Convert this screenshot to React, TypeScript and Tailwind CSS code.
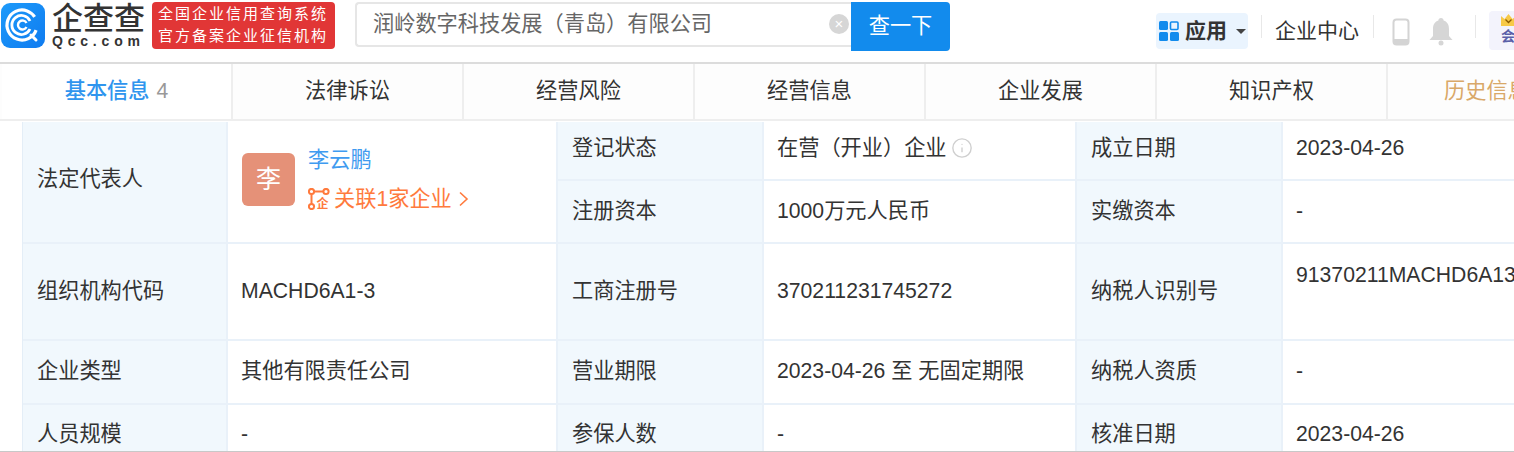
import { Info } from 'lucide-react';

const font = 'font-["Liberation_Sans","Noto_Sans_CJK_SC",sans-serif]';

const tabs = ['法律诉讼', '经营风险', '经营信息', '企业发展', '知识产权'];

function Logo() {
  return (
    <svg width="44" height="45" viewBox="0 0 44 45" className="shrink-0">
      <defs>
        <linearGradient id="qcc" x1="0" y1="0" x2="1" y2="1">
          <stop offset="0" stopColor="#1d9bfa" />
          <stop offset="1" stopColor="#0f7bf0" />
        </linearGradient>
      </defs>
      <rect x="0" y="0" width="44" height="45" rx="9" fill="url(#qcc)" />
      <circle cx="21" cy="22" r="15" fill="none" stroke="#fff" strokeWidth="3.2" strokeDasharray="80 14" transform="rotate(20 21 22)" />
      <path d="M29 18a9.500 9.500 0 1 0 0 8" fill="none" stroke="#fff" strokeWidth="2.800" />
      <path d="M25.500 20a4.500 4.500 0 1 0 0 4" fill="none" stroke="#fff" strokeWidth="2.400" />
      <path d="M30 32l5 5" stroke="#fff" strokeWidth="3" strokeLinecap="round" />
    </svg>
  );
}

function Header() {
  return (
    <div className="flex h-[64px] shrink-0 border-b-2 border-[#dcdcdc] bg-white pl-px">
      <div className="mt-[3px]"><Logo /></div>
      <div className="ml-[7px] w-[100px] shrink-0 pt-[3px]">
        <div className="text-[31px] font-medium leading-[32px] text-[#333]">企查查</div>
        <div className="text-[14px] font-bold leading-[13px] tracking-[4.800px] text-[#333]">Qcc.com</div>
      </div>
      <div className="mt-0.5 flex h-[47px] w-[183px] shrink-0 flex-col justify-center rounded-sm bg-[#e13636] pb-px pl-[6px] text-[15px] leading-[22px] tracking-[2px] text-white">
        <div>全国企业信用查询系统</div>
        <div>官方备案企业征信机构</div>
      </div>
      <div className="ml-5 mt-0.5 flex h-[45px] w-[496px] shrink-0 items-center justify-between rounded-l border-2 border-r-0 border-[#e6e6e6] pb-[2px] pl-4 pr-[2px] text-[21.200px] text-[#666]">
        <span>润岭数字科技发展（青岛）有限公司</span>
        <span className="flex h-5 w-5 items-center justify-center rounded-full bg-[#d6d6d6] text-[15px] leading-none text-white">×</span>
      </div>
      <div className="mt-0.5 flex h-[49px] w-[99px] shrink-0 items-center justify-center rounded-r-sm bg-[#128bed] pb-px text-[21.200px] text-white">查一下</div>

      <div className="ml-[206px] mt-[13px] flex h-[36px] w-[92px] shrink-0 items-center rounded bg-[#eaf4fe] pl-[3px]">
        <svg width="20" height="20" viewBox="0 0 20 20">
          <rect x="0" y="0" width="9" height="9" rx="1.500" fill="#128bed" />
          <rect x="11.500" y="1" width="7.500" height="7.500" rx="1" fill="none" stroke="#128bed" strokeWidth="1.600" />
          <rect x="0" y="11" width="9" height="9" rx="1.500" fill="#128bed" />
          <rect x="11" y="11" width="9" height="9" rx="1.500" fill="#128bed" />
        </svg>
        <span className="ml-[6px] text-[21px] font-bold text-[#333]">应用</span>
        <span className="ml-[9px] h-0 w-0 border-x-[5px] border-t-[5px] border-x-transparent border-t-[#444]" />
      </div>
      <div className="ml-[13px] mt-[15px] h-[23px] w-px shrink-0 bg-[#e8e8e8]" />
      <div className="ml-[13px] mt-[15px] shrink-0 text-[21px] leading-[31px] text-[#333]">企业中心</div>
      <div className="ml-[14px] mt-[15px] h-[23px] w-px shrink-0 bg-[#e8e8e8]" />
      <svg width="18" height="28" viewBox="0 0 18 28" className="ml-[18px] mt-[18px] shrink-0">
        <rect x="1.500" y="1.500" width="15" height="25" rx="3" fill="none" stroke="#d4d4d4" strokeWidth="2" />
        <rect x="2" y="21" width="14" height="5" fill="#d4d4d4" />
      </svg>
      <svg width="24" height="28" viewBox="0 0 24 28" className="ml-[19px] mt-[18px] shrink-0">
        <path d="M12 0c1.600 0 2.600 1 2.600 2.600C18.500 4 20 7 20 11v7l3.500 4h-23L4 18v-7c0-4 1.500-7 5.400-8.400C9.400 1 10.400 0 12 0z" fill="#d6d6d6" />
        <circle cx="12" cy="25" r="2.500" fill="#d6d6d6" />
      </svg>
      <div className="ml-[22px] mt-[15px] h-[23px] w-px shrink-0 bg-[#e8e8e8]" />
      <div className="ml-[13px] mt-[11px] flex h-[39px] w-[40px] shrink-0 flex-col rounded-sm bg-[#f3f3fc] pl-3">
        <svg width="15" height="12" viewBox="0 0 15 12" className="mt-[3px]">
          <path d="M0 2l3.500 3L7.500 0l4 5L15 2v10H0z" fill="#f7c948" />
          <path d="M4.500 5.500l3 3 3-3" fill="none" stroke="#8a5a00" strokeWidth="1.300" />
        </svg>
        <span className="text-[14px] font-bold leading-[20px] text-[#5a5fa8]">会员</span>
      </div>
    </div>
  );
}

function Tabs() {
  return (
    <div className="flex h-[57px] shrink-0 border-b-2 border-[#eeeeee] bg-[#fdfdfd] pl-[2px] text-[21.200px] text-[#333]">
      <div className="flex w-[231px] shrink-0 items-center justify-center border-r-2 border-[#eeeeee] bg-white pb-px">
        <span className="font-medium text-[#2f95ee]">基本信息</span>
        <span className="ml-[7px] text-[#999]">4</span>
      </div>
      {tabs.map(t => (
        <div key={t} className="flex w-[231px] shrink-0 items-center justify-center border-r-2 border-[#eeeeee] pb-px">{t}</div>
      ))}
      <div className="flex w-[200px] shrink-0 items-center pb-px pl-[56px] text-[#d9a868]"><span className="whitespace-nowrap">历史信息</span></div>
    </div>
  );
}

const label = 'flex items-center border-b-2 border-r-2 border-[#e9f1f9] bg-[#f1f8fd] pl-[14px]';
const value = 'flex items-center border-b-2 border-r-2 border-[#e9f1f9] pl-[13px] whitespace-nowrap';

function Table() {
  return (
    <div className="ml-[22px] mt-[1px] grid grid-cols-[205px_330px_206px_313px_206px_240px] grid-rows-[59px_63px_97px_64px_60px] border-l border-[#e4eef7] text-[21.200px] text-[#333]">
      <div className={`${label} row-span-2 pb-[7px]`}>法定代表人</div>
      <div className={`${value} row-span-2`}>
        <div className="mb-[5px] ml-px flex h-[53px] w-[53px] shrink-0 items-center justify-center rounded-md bg-[#e59178] text-[25px] text-white">李</div>
        <div className="mb-[5px] ml-[13px]">
          <div className="leading-[30px] text-[#3f9bf0]">李云鹏</div>
          <div className="mt-[9px] flex items-center leading-[30px] text-[#ff7a3d]">
            <svg width="22" height="22" viewBox="0 0 22 22" className="mr-[4px] shrink-0">
              <circle cx="3.500" cy="3.500" r="2.600" fill="none" stroke="#ff7a3d" strokeWidth="2" />
              <circle cx="18" cy="3.500" r="2.600" fill="none" stroke="#ff7a3d" strokeWidth="2" />
              <circle cx="3.500" cy="18.500" r="2.600" fill="none" stroke="#ff7a3d" strokeWidth="2" />
              <path d="M6 3.500h9.500M3.500 6v10" stroke="#ff7a3d" strokeWidth="2" />
              <text x="14.500" y="20" fontSize="12" fontWeight="700" textAnchor="middle" fill="#ff7a3d">企</text>
            </svg>
            <span>关联1家企业</span>
            <svg width="11" height="16" viewBox="0 0 11 16" className="ml-[6px]">
              <path d="M2 1.500l7 6.500-7 6.500" fill="none" stroke="#ff7a3d" strokeWidth="1.600" />
            </svg>
          </div>
        </div>
      </div>
      <div className={`${label} pb-[5px]`}>登记状态</div>
      <div className={`${value} pb-[5px]`}>
        在营（开业）企业
        <Info size={22} strokeWidth={1.5} className="ml-[4px] text-[#cfcfcf]" />
      </div>
      <div className={`${label} pb-[5px]`}>成立日期</div>
      <div className={`${value} pb-[5px]`}>2023-04-26</div>

      <div className={`${label} pb-px`}>注册资本</div>
      <div className={`${value} pb-px`}>1000万元人民币</div>
      <div className={`${label} pb-px`}>实缴资本</div>
      <div className={`${value} pb-px`}>-</div>

      <div className={`${label} pb-px`}>组织机构代码</div>
      <div className={`${value} pb-px`}>MACHD6A1-3</div>
      <div className={`${label} pb-px`}>工商注册号</div>
      <div className={`${value} pb-px`}>370211231745272</div>
      <div className={`${label} pb-px`}>纳税人识别号</div>
      <div className={`${value} items-start pt-[15px]`}>91370211MACHD6A13</div>

      <div className={`${label} pb-[3px]`}>企业类型</div>
      <div className={`${value} pb-[3px]`}>其他有限责任公司</div>
      <div className={`${label} pb-[3px]`}>营业期限</div>
      <div className={`${value} pb-[3px]`}>2023-04-26 至 无固定期限</div>
      <div className={`${label} pb-[3px]`}>纳税人资质</div>
      <div className={`${value} pb-[3px]`}>-</div>

      <div className={label}>人员规模</div>
      <div className={value}>-</div>
      <div className={label}>参保人数</div>
      <div className={value}>-</div>
      <div className={label}>核准日期</div>
      <div className={value}>2023-04-26</div>
    </div>
  );
}

export default function App() {
  return (
    <div className={`${font} relative flex h-[452px] w-[1514px] flex-col overflow-hidden bg-white`}>
      <Header />
      <Tabs />
      <Table />
      <div className="absolute inset-x-0 bottom-0 h-px bg-[#c8c8c8]" />
    </div>
  );
}
